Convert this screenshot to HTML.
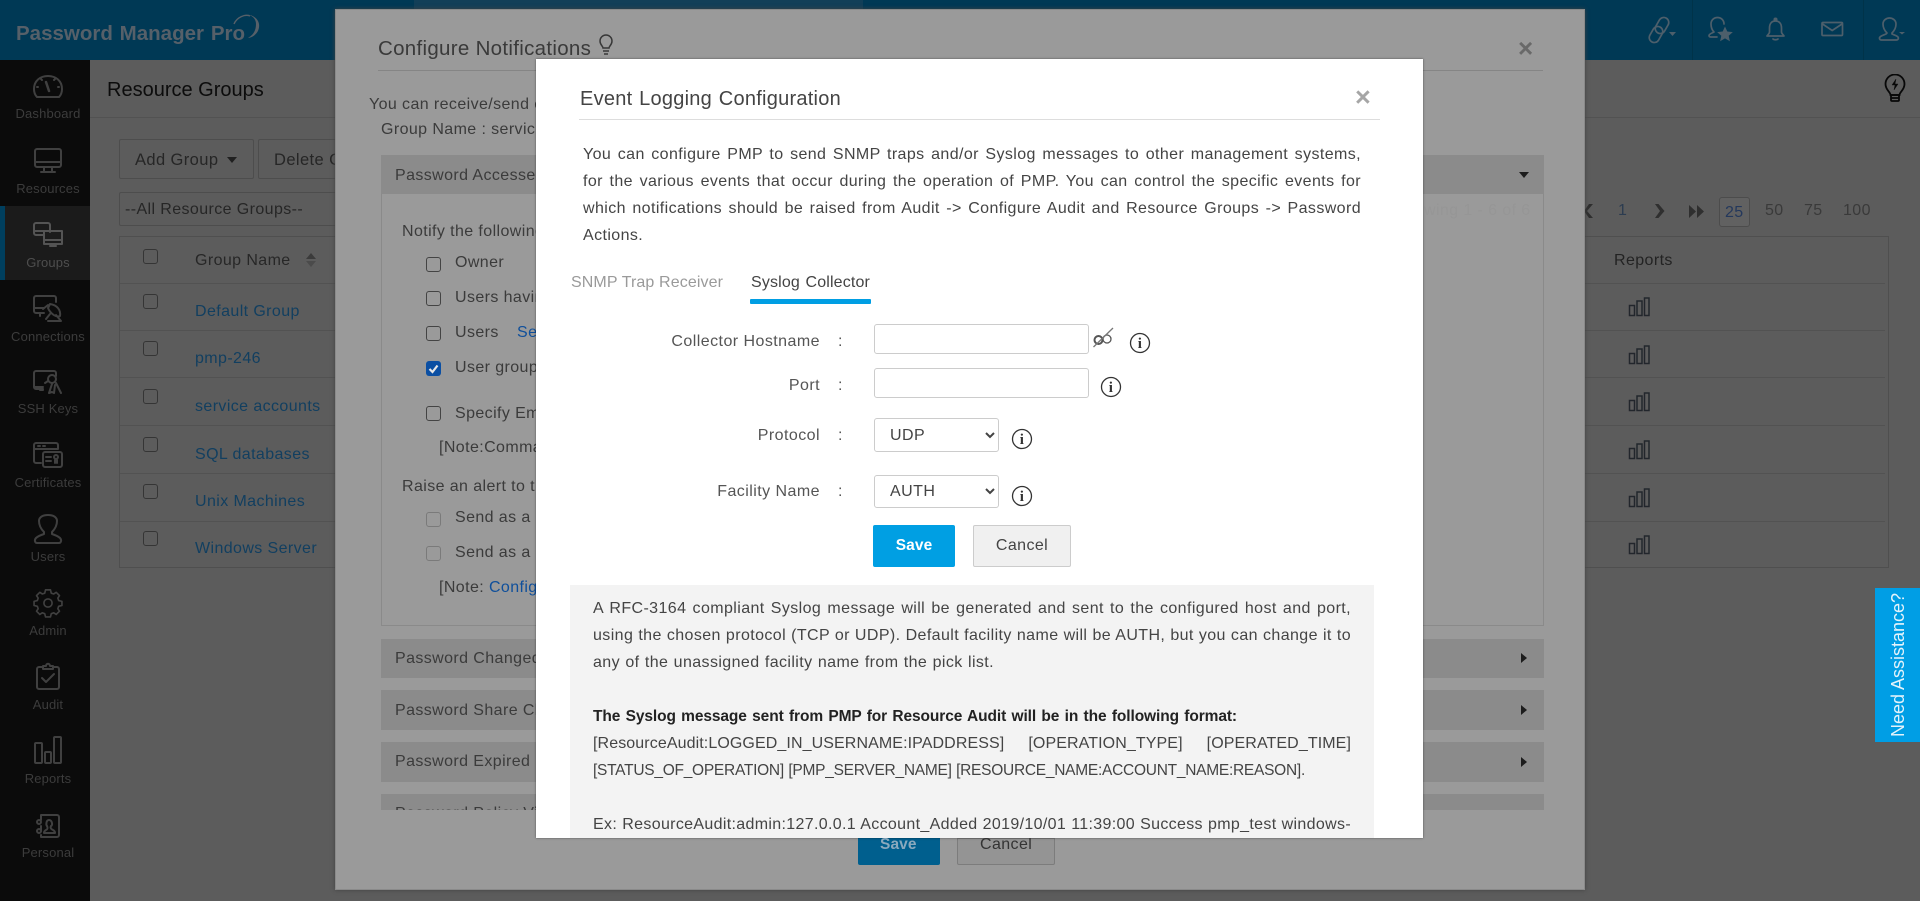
<!DOCTYPE html>
<html lang="en"><head><meta charset="utf-8"><title>Password Manager Pro</title>
<style>
*{box-sizing:border-box}
html,body{margin:0;padding:0;width:1920px;height:901px;overflow:hidden;background:#5c5c5c}
body{position:relative;font-family:"Liberation Sans",Arial,sans-serif;font-size:16px;color:#222;letter-spacing:.4px}
.a{position:absolute}
.t{position:absolute;white-space:nowrap;line-height:24px;height:24px;margin-top:1px}
.j{text-align-last:justify;text-align:justify}
.nav{position:absolute;left:0;width:96px;text-align:center;font-size:13px;line-height:18px;height:18px;color:#3c3c3c;letter-spacing:.15px;white-space:nowrap}
.cb{position:absolute;width:15px;height:15px;border:1.5px solid #353535;border-radius:3px}
.row{position:absolute;left:120px;width:1765px;height:1px;background:#525252}
.lnk{color:#123f60}
.acc{position:absolute;left:381px;width:1163px;background:#8b8b8b}
.c2{color:#3b3b3b}
.lab{position:absolute;white-space:nowrap;line-height:24px;height:24px;color:#555;text-align:right;width:220px;left:600px;margin-top:1px;letter-spacing:.45px}
.col{position:absolute;left:838px;line-height:24px;height:24px;color:#555;margin-top:1px}
input,select{font-family:"Liberation Sans",Arial,sans-serif;font-size:16px;letter-spacing:.45px;color:#444;background:#fff;border:1px solid #ccc;border-radius:3px;position:absolute;margin:0}
select{padding-left:11px;outline:0}
.g{color:#444}
</style></head><body>

<!-- top bar -->
<div class="a" style="left:0;top:0;width:1920px;height:60px;background:#003955"></div>
<div class="a" style="left:414px;top:0;width:449px;height:10px;background:#123f58"></div>
<div class="a" style="left:1692px;top:0;width:1px;height:60px;background:#003349"></div>
<div class="a" style="left:1863px;top:0;width:1px;height:60px;background:#003349"></div>
<div class="t j" style="left:16px;top:19px;width:229px;font-size:20.500px;font-weight:bold;color:#566069;letter-spacing:0;line-height:28px;height:28px">Password Manager Pro</div>
<svg class="a" style="left:232px;top:10px" width="34" height="34" viewBox="0 0 34 34" fill="none" stroke="#566069"><path d="M2 14C5 7 13 4 18 6" stroke-width="1.400"/><path d="M10 5c7-2 14 2 14 9 0 7-3 11-8 14 7-1 12-7 11-14C26 8 19 3 10 5z" fill="#566069" stroke="none"/></svg>

<!-- header icons -->
<svg class="a" style="left:1640px;top:5px" width="280" height="50" viewBox="0 0 280 50" fill="none" stroke="#4d5f6b" stroke-width="1.700" stroke-linecap="round" stroke-linejoin="round">
<rect x="11" y="21" width="10" height="17" rx="5" transform="rotate(30 16 29.500)"/><rect x="17" y="12" width="10" height="17" rx="5" transform="rotate(30 22 20.500)"/>
<path d="M29 27h7l-3.500 4z" fill="#4d5f6b" stroke="none"/>
<path d="M74 27c-2-2-3-5-3-8 0-4 3-6.500 6.500-6.500S84 15 84 19M74 27c-2 1-5 2-5 3.500 0 .8.500 1.500 2 1.500h6"/>
<path d="M85 21.500l2.300 5 5.500.6-4.100 3.700 1.200 5.400-4.900-2.800-4.900 2.800 1.200-5.400-4.100-3.700 5.500-.6z" fill="#4d5f6b" stroke="none"/>
<path d="M135.500 16c-4.500 0-6 3.500-6 7v4c0 1.500-1.500 2.500-2.500 4h17c-1-1.500-2.500-2.500-2.500-4v-4c0-3.500-1.500-7-6-7z"/><path d="M133 34c1 1 4 1 5 0"/><circle cx="135.500" cy="14.500" r="1.200" fill="#4d5f6b"/>
<rect x="182" y="17.500" width="20.500" height="13" rx="1"/><path d="M182.500 19l9.700 6.500L202 19"/>
<path d="M247 28c-2-2-4-5-4-9 0-3.500 3-6 6.500-6s6.500 2.500 6.500 6c0 4-2 7-4 9v1c2 1 5 1.500 6 3 .7 1 .3 3-1.500 3h-15c-2 0-2.500-2-1.500-3 1-1.500 4-2 6-3z"/>
<path d="M259 27h6l-3 2.500z" fill="#4d5f6b" stroke="none"/>
</svg>

<!-- sidebar -->
<div class="a" style="left:0;top:60px;width:90px;height:841px;background:#0b0b0b"></div>
<div class="a" style="left:0;top:206px;width:90px;height:74px;background:#1b1b1b"></div>
<div class="a" style="left:0;top:206px;width:5px;height:74px;background:#003f5e"></div>
<svg class="a" style="left:0;top:60px" width="90" height="841" viewBox="0 60 90 841" fill="none" stroke="#404040" stroke-width="2" stroke-linecap="round" stroke-linejoin="round">
<!-- dashboard -->
<path d="M37 97c-2-2-3-5-3-8 0-8 6-13 14-13s14 5 14 13c0 3-1 6-3 8z"/><path d="M46 82l3 9" stroke-width="2.500"/><path d="M41 79l1 1M55 79l-1 1M37 87h1M59 87h-1"/>
<!-- resources -->
<rect x="35" y="149" width="26" height="18" rx="2"/><path d="M35 162h26M44 168v3M52 168v3M41 172h14"/>
<!-- groups -->
<g stroke="#545454"><path d="M44 235h-8a2 2 0 0 1-2-2v-8a2 2 0 0 1 2-2h12a2 2 0 0 1 2 2v7M34 231h10"/><rect x="44" y="231" width="18" height="13"/><path d="M44 240h18M50 246h6"/></g>
<!-- connections -->
<path d="M44 313h-8a2 2 0 0 1-2-2v-13a2 2 0 0 1 2-2h18a2 2 0 0 1 2 2v4M34 308h10M40 313v3"/><path d="M50 304c7 1 11 6 10 12-4 2-10-3-12-8zM46 319l4-5M48 321h13l-5-6"/><path d="M43 309l5-4" />
<!-- ssh -->
<path d="M43 389h-7a2 2 0 0 1-2-2v-14a2 2 0 0 1 2-2h18a2 2 0 0 1 2 2v3M34 387h9M40 390h3"/><circle cx="52" cy="379" r="4"/><path d="M48 381l-3 2M52 384l-3 9 3-1 2 1 1-8M56 383l5 10"/>
<!-- certs -->
<path d="M41 463h-5a2 2 0 0 1-2-2v-16a2 2 0 0 1 2-2h20a2 2 0 0 1 2 2v4M34 449h24M38 446h2M43 446h2"/><rect x="43" y="452" width="19" height="15" rx="2"/><path d="M46 457h5M46 461h5"/><circle cx="56" cy="457" r="2"/><path d="M55 460v3M57 460v3"/>
<!-- users -->
<path d="M44 532c-3-3-5-7-5-11 0-4 4-6 9-6s9 2 9 6c0 4-2 8-5 11v2c3 1 6 2 8 4 2 2 1 5-1 5H37c-2 0-3-3-1-5 2-2 5-3 8-4z"/>
<!-- admin -->
<g transform="translate(48 603) scale(.82) translate(-48 -605)"><path d="M45 589h6l1 4 3 1 3-2 4 4-2 3 1 3 4 1v5l-4 1-1 3 2 3-4 4-3-2-3 1-1 4h-6l-1-4-3-1-3 2-4-4 2-3-1-3-4-1v-5l4-1 1-3-2-3 4-4 3 2 3-1z"/><circle cx="48" cy="605" r="5"/></g>
<!-- audit -->
<path d="M43 667h-4a2 2 0 0 0-2 2v18a2 2 0 0 0 2 2h18a2 2 0 0 0 2-2v-18a2 2 0 0 0-2-2h-4M43 669v-3h3c0-3 4-3 4 0h3v3z"/><path d="M42 678l4 4 8-8"/>
<!-- reports -->
<rect x="35" y="743" width="7" height="20" rx="1"/><rect x="45" y="752" width="6" height="11" rx="1"/><rect x="54" y="737" width="7" height="26" rx="1"/>
<!-- personal -->
<path d="M41 815h16a2 2 0 0 1 2 2v18a2 2 0 0 1-2 2H41M41 815v5M41 826v5M41 835v2"/><circle cx="39" cy="822" r="2"/><circle cx="39" cy="831" r="2"/><path d="M46 830c2-1 2-2 1-4-1-1-1-6 2-6s4 5 2 6c-1 2 0 3 2 4 2 1 2 3 2 3H44s0-2 2-3z"/>
</svg>
<div class="nav" style="top:105px">Dashboard</div>
<div class="nav" style="top:180px">Resources</div>
<div class="nav" style="top:254px;color:#4e4e4e">Groups</div>
<div class="nav" style="top:328px">Connections</div>
<div class="nav" style="top:400px">SSH Keys</div>
<div class="nav" style="top:474px">Certificates</div>
<div class="nav" style="top:548px">Users</div>
<div class="nav" style="top:622px">Admin</div>
<div class="nav" style="top:696px">Audit</div>
<div class="nav" style="top:770px">Reports</div>
<div class="nav" style="top:844px">Personal</div>

<!-- main page -->
<div class="a" style="left:90px;top:117px;width:1830px;height:1px;background:#525252"></div>
<div class="t" style="left:107px;top:77px;font-size:20px;color:#0c0c0c;letter-spacing:0">Resource Groups</div>
<svg class="a" style="left:1880px;top:74px" width="30" height="30" viewBox="0 0 30 30" fill="none" stroke="#080808" stroke-width="1.800"><path d="M10.500 21c0-3-5-5-5-11a9.500 9.500 0 0 1 19 0c0 6-5 8-5 11z"/><path d="M11 21h8v5a1 1 0 0 1-1 1h-6a1 1 0 0 1-1-1zM11 24h8"/><path d="M16 5l-4 6h3l-1 5 4-6h-3z" fill="#080808" stroke-width=".4"/></svg>

<div class="a" style="left:119px;top:139px;width:135px;height:40px;border:1px solid #4d4d4d;border-radius:2px"></div>
<div class="t" style="left:135px;top:147px;font-size:16.500px;color:#262626">Add Group</div>
<div class="a" style="left:227px;top:157px;border:5px solid transparent;border-top:6px solid #202020;border-bottom:0"></div>
<div class="a" style="left:258px;top:139px;width:140px;height:40px;border:1px solid #4d4d4d;border-radius:2px"></div>
<div class="t" style="left:274px;top:147px;font-size:16.500px;color:#262626">Delete Group</div>
<div class="a" style="left:119px;top:192px;width:300px;height:34px;border:1px solid #4d4d4d;border-radius:2px"></div>
<div class="t" style="left:125px;top:197px;color:#262626">--All Resource Groups--</div>

<!-- table -->
<div class="a" style="left:119px;top:236px;width:1770px;height:332px;border:1px solid #4f4f4f"></div>
<div class="row" style="top:283px"></div><div class="row" style="top:330px"></div><div class="row" style="top:377px"></div><div class="row" style="top:425px"></div><div class="row" style="top:473px"></div><div class="row" style="top:521px"></div>
<div class="cb" style="left:143px;top:249px"></div>
<div class="cb" style="left:143px;top:294px"></div>
<div class="cb" style="left:143px;top:341px"></div>
<div class="cb" style="left:143px;top:389px"></div>
<div class="cb" style="left:143px;top:437px"></div>
<div class="cb" style="left:143px;top:484px"></div>
<div class="cb" style="left:143px;top:531px"></div>
<div class="t" style="left:195px;top:248px;color:#272727">Group Name</div>
<div class="a" style="left:306px;top:253px;border:5px solid transparent;border-bottom:6px solid #3b3b3b;border-top:0"></div>
<div class="a" style="left:306px;top:261px;border:5px solid transparent;border-top:6px solid #4b4b4b;border-bottom:0"></div>
<div class="t lnk" style="left:195px;top:299px">Default Group</div>
<div class="t lnk" style="left:195px;top:346px">pmp-246</div>
<div class="t lnk" style="left:195px;top:394px">service accounts</div>
<div class="t lnk" style="left:195px;top:442px">SQL databases</div>
<div class="t lnk" style="left:195px;top:489px">Unix Machines</div>
<div class="t lnk" style="left:195px;top:536px">Windows Server</div>

<div class="t" style="left:1614px;top:248px;color:#232323">Reports</div>
<svg class="a" style="left:1628px;top:280px" width="24" height="280" viewBox="0 0 24 280" fill="none" stroke="#22262c" stroke-width="1.500">
<defs><g id="rb"><rect x="1.500" y="-10.500" width="5" height="10"/><rect x="9" y="-15" width="5" height="14.500"/><rect x="16.500" y="-18" width="4.500" height="17.500"/></g></defs>
<use href="#rb" y="36"/><use href="#rb" y="84"/><use href="#rb" y="131"/><use href="#rb" y="179"/><use href="#rb" y="227"/><use href="#rb" y="274"/></svg>

<!-- pagination -->
<svg class="a" style="left:1580px;top:198px" width="130" height="26" viewBox="0 0 130 26" fill="#2f2f2f"><path d="M13 6l-6 7 6 7h-4l-5-7 5-7z"/><path d="M75 6h3.500l6 7-6 7H75l5-7z"/><path d="M109 7l7 6.500-7 6.500zM117 7l7 6.500-7 6.500z"/></svg>
<div class="t" style="left:1618px;top:198px;color:#2c3c50">1</div>
<div class="a" style="left:1719px;top:197px;width:31px;height:30px;border:1px solid #4c4c4c;border-radius:3px;background:#616161"></div>
<div class="t" style="left:1725px;top:200px;color:#24385c">25</div>
<div class="t" style="left:1765px;top:198px;color:#3a3a3a">50</div>
<div class="t" style="left:1804px;top:198px;color:#3a3a3a">75</div>
<div class="t" style="left:1843px;top:198px;color:#3a3a3a">100</div>

<!-- need assistance -->
<div class="a" style="left:1875px;top:588px;width:45px;height:154px;background:#009ee5"></div>
<div class="a" style="left:1820px;top:651px;width:156px;height:28px;line-height:28px;text-align:center;color:#e3f3fb;font-size:18px;letter-spacing:0;transform:rotate(-90deg);white-space:nowrap">Need Assistance?</div>

<!-- configure notifications modal (dimmed) -->
<div class="a" style="left:335px;top:9px;width:1250px;height:881px;background:#9a9a9a;border:1px solid #8a8a8a;box-shadow:0 0 4px #404040;overflow:hidden"></div>
<div class="t c2" style="left:378px;top:36px;font-size:20.500px;letter-spacing:.3px;color:#3a3a3a;line-height:24px" >Configure Notifications</div>
<svg class="a" style="left:596px;top:33px" width="20" height="24" viewBox="0 0 20 24" fill="none" stroke="#383838" stroke-width="1.500"><path d="M7 15c0-2-3-3-3-7a6 6 0 0 1 12 0c0 4-3 5-3 7zM7 18h6M8 21h4"/></svg>
<div class="a" style="left:378px;top:70px;width:1165px;height:1px;background:#858585"></div>
<div class="t" style="left:1518px;top:33px;font-size:26px;font-weight:bold;color:#696969;line-height:28px;height:28px">×</div>
<div class="t c2" style="left:369px;top:92px">You can receive/send email notifications</div>
<div class="t c2" style="left:381px;top:117px">Group Name : service accounts</div>
<div class="acc" style="top:155px;height:39px"></div>
<div class="a" style="left:381px;top:194px;width:1163px;height:432px;border:1px solid #8a8a8a;border-top:0"></div>
<div class="t c2" style="left:395px;top:163px">Password Accessed</div>
<div class="a" style="left:1519px;top:172px;border:5.500px solid transparent;border-top:6px solid #1c1c1c;border-bottom:0"></div>
<div class="t" style="left:1424px;top:198px;color:#969696">wing 1 - 6 of 6</div>
<div class="t c2" style="left:402px;top:219px">Notify the following users</div>
<div class="cb" style="left:426px;top:257px;border-color:#444"></div><div class="t c2" style="left:455px;top:250px">Owner</div>
<div class="cb" style="left:426px;top:291px;border-color:#444"></div><div class="t c2" style="left:455px;top:285px">Users having access</div>
<div class="cb" style="left:426px;top:326px;border-color:#444"></div><div class="t c2" style="left:455px;top:320px">Users</div><div class="t" style="left:517px;top:320px;color:#0f4f9b">Select</div>
<svg class="a" style="left:426px;top:361px" width="15" height="15" viewBox="0 0 15 15"><rect width="15" height="15" rx="3" fill="#0b4fa3"/><path d="M3.500 8l3 3 5-6.500" fill="none" stroke="#e8e8e8" stroke-width="2.200"/></svg><div class="t c2" style="left:455px;top:355px">User groups</div>
<div class="cb" style="left:426px;top:406px;border-color:#444"></div><div class="t c2" style="left:455px;top:401px">Specify Email</div>
<div class="t c2" style="left:439px;top:435px">[Note:Comma separated</div>
<div class="t c2" style="left:402px;top:474px">Raise an alert to the</div>
<div class="cb" style="left:426px;top:512px;border-color:#7a7a7a"></div><div class="t c2" style="left:455px;top:505px">Send as a SNMP</div>
<div class="cb" style="left:426px;top:546px;border-color:#7a7a7a"></div><div class="t c2" style="left:455px;top:540px">Send as a Syslog</div>
<div class="t c2" style="left:439px;top:575px">[Note: <span style="color:#0f4f9b">Configure</span></div>
<div class="acc" style="top:639px;height:39px"></div><div class="t c2" style="left:395px;top:646px">Password Changed</div>
<div class="acc" style="top:690px;height:40px"></div><div class="t c2" style="left:395px;top:698px">Password Share Change</div>
<div class="acc" style="top:742px;height:40px"></div><div class="t c2" style="left:395px;top:749px">Password Expired</div>
<div class="a" style="left:381px;top:794px;width:1163px;height:16px;overflow:hidden;background:#8b8b8b"><div class="t c2" style="left:14px;top:7px">Password Policy Violation</div></div>
<div class="a" style="left:1521px;top:653px;border:5px solid transparent;border-left:6px solid #1c1c1c;border-right:0"></div>
<div class="a" style="left:1521px;top:705px;border:5px solid transparent;border-left:6px solid #1c1c1c;border-right:0"></div>
<div class="a" style="left:1521px;top:757px;border:5px solid transparent;border-left:6px solid #1c1c1c;border-right:0"></div>
<div class="a" style="left:858px;top:838px;width:82px;height:27px;background:#005f8e;border-radius:0 0 2px 2px"></div>
<div class="a" style="left:957px;top:838px;width:98px;height:27px;background:#949494;border:1px solid #7c7c7c;border-radius:0 0 2px 2px"></div>

<!-- event logging modal -->
<div class="a" style="left:536px;top:59px;width:887px;height:779px;background:#fff;box-shadow:0 0 2px rgba(0,0,0,.5);overflow:hidden">
  <div class="t" style="left:44px;top:27px;width:261px;font-size:20px;letter-spacing:.25px;color:#444;text-align-last:justify">Event Logging Configuration</div>
  <div class="a" style="left:43px;top:60px;width:801px;height:1px;background:#ddd"></div>
  <div class="t" style="left:819px;top:23px;font-size:27px;font-weight:bold;color:#a6a6a6;line-height:28px;height:28px;letter-spacing:0">×</div>
  <div class="t j g" style="left:47px;top:83px;width:778px">You can configure PMP to send SNMP traps and/or Syslog messages to other management systems,</div>
  <div class="t j g" style="left:47px;top:110px;width:778px">for the various events that occur during the operation of PMP. You can control the specific events for</div>
  <div class="t j g" style="left:47px;top:137px;width:778px">which notifications should be raised from Audit -&gt; Configure Audit and Resource Groups -&gt; Password</div>
  <div class="t g" style="left:47px;top:164px">Actions.</div>
  <div class="t j" style="left:35px;top:211px;width:152px;color:#9a9a9a;letter-spacing:.1px">SNMP Trap Receiver</div>
  <div class="t j" style="left:215px;top:211px;width:119px;color:#444;letter-spacing:.15px">Syslog Collector</div>
  <div class="a" style="left:214px;top:240px;width:121px;height:5px;background:#009ee3;border-radius:1px"></div>

  <div class="lab" style="left:64px;top:270px">Collector Hostname</div><div class="col" style="left:302px;top:270px">:</div>
  <div class="lab" style="left:64px;top:314px">Port</div><div class="col" style="left:302px;top:314px">:</div>
  <div class="lab" style="left:64px;top:364px">Protocol</div><div class="col" style="left:302px;top:364px">:</div>
  <div class="lab" style="left:64px;top:420px">Facility Name</div><div class="col" style="left:302px;top:420px">:</div>

  <input type="text" style="left:338px;top:265px;width:215px;height:30px">
  <input type="text" style="left:338px;top:309px;width:215px;height:30px">
  <select style="left:338px;top:359px;width:125px;height:34px"><option>UDP</option><option>TCP</option></select>
  <select style="left:338px;top:416px;width:125px;height:33px"><option>AUTH</option></select>

  <svg class="a" style="left:556px;top:268px" width="24" height="22" viewBox="0 0 24 22" fill="none" stroke="#555" stroke-width="1.300"><circle cx="6.500" cy="13" r="4" stroke-width="2"/><circle cx="15" cy="12" r="4"/><path d="M1.500 20L21 1" stroke="#777"/></svg>
  <svg class="a" style="left:593px;top:273px" width="22" height="22" viewBox="0 0 22 22"><circle cx="11" cy="11" r="9.500" fill="none" stroke="#333" stroke-width="1.300"/><text x="11" y="16" text-anchor="middle" font-family="Liberation Serif" font-weight="bold" font-size="15" fill="#333">i</text></svg>
  <svg class="a" style="left:564px;top:317px" width="22" height="22" viewBox="0 0 22 22"><circle cx="11" cy="11" r="9.500" fill="none" stroke="#333" stroke-width="1.300"/><text x="11" y="16" text-anchor="middle" font-family="Liberation Serif" font-weight="bold" font-size="15" fill="#333">i</text></svg>
  <svg class="a" style="left:475px;top:369px" width="22" height="22" viewBox="0 0 22 22"><circle cx="11" cy="11" r="9.500" fill="none" stroke="#333" stroke-width="1.300"/><text x="11" y="16" text-anchor="middle" font-family="Liberation Serif" font-weight="bold" font-size="15" fill="#333">i</text></svg>
  <svg class="a" style="left:475px;top:426px" width="22" height="22" viewBox="0 0 22 22"><circle cx="11" cy="11" r="9.500" fill="none" stroke="#333" stroke-width="1.300"/><text x="11" y="16" text-anchor="middle" font-family="Liberation Serif" font-weight="bold" font-size="15" fill="#333">i</text></svg>

  <div class="a" style="left:337px;top:466px;width:82px;height:42px;background:#009fe3;border-radius:2px;color:#fff;text-align:center;line-height:41px;font-weight:bold;font-size:15.500px;letter-spacing:.1px">Save</div>
  <div class="a" style="left:437px;top:466px;width:98px;height:42px;background:#f0f0f0;border:1px solid #ccc;border-radius:2px;color:#444;text-align:center;line-height:39px">Cancel</div>

  <div class="a" style="left:34px;top:526px;width:804px;height:253px;background:#f3f3f3"></div>
  <div class="t j g" style="left:57px;top:537px;width:758px">A RFC-3164 compliant Syslog message will be generated and sent to the configured host and port,</div>
  <div class="t j g" style="left:57px;top:564px;width:758px">using the chosen protocol (TCP or UDP). Default facility name will be AUTH, but you can change it to</div>
  <div class="t j g" style="left:57px;top:591px;width:401px">any of the unassigned facility name from the pick list.</div>
  <div class="t j" style="left:57px;top:645px;width:644px;font-weight:bold;font-size:15.500px;letter-spacing:-.1px;color:#222">The Syslog message sent from PMP for Resource Audit will be in the following format:</div>
  <div class="t j g" style="left:57px;top:672px;width:758px;letter-spacing:.1px">[ResourceAudit:LOGGED_IN_USERNAME:IPADDRESS] [OPERATION_TYPE] [OPERATED_TIME]</div>
  <div class="t j g" style="left:57px;top:699px;width:712px;font-size:15.500px;letter-spacing:-.26px">[STATUS_OF_OPERATION] [PMP_SERVER_NAME] [RESOURCE_NAME:ACCOUNT_NAME:REASON].</div>
  <div class="t j g" style="left:57px;top:753px;width:758px;letter-spacing:.33px">Ex: ResourceAudit:admin:127.0.0.1 Account_Added 2019/10/01 11:39:00 Success pmp_test windows-</div>
</div>

<!-- clipped save/cancel labels of underlying modal -->
<div class="a" style="left:858px;top:838px;width:197px;height:27px;overflow:hidden"><div class="t" style="left:22px;top:-6px;color:#8aa9bd;font-weight:bold;font-size:15.500px;letter-spacing:.1px">Save</div><div class="t" style="left:122px;top:-6px;color:#333">Cancel</div></div>
</body></html>
